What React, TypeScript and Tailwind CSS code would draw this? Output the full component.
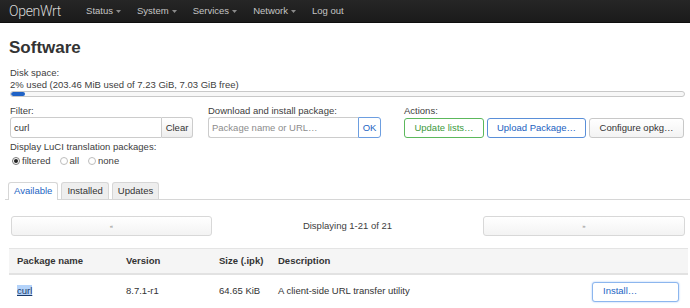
import React from 'react';

const menu = ['Status', 'System', 'Services', 'Network'];

const Caret = () => (
  <svg width="5" height="3" viewBox="0 0 5 3" className="ml-[3px]">
    <path d="M0 0h5L2.5 3z" fill="#8a8a8a" />
  </svg>
);

const Radio = ({ checked, label }: { checked?: boolean; label: string }) => (
  <label className="flex items-center mr-[9px]">
    <span
      className={`w-[8px] h-[8px] rounded-full border bg-white flex items-center justify-center ${
        checked ? 'border-[#777]' : 'border-[#bdbdbd]'
      }`}
    >
      {checked && <span className="w-[4px] h-[4px] rounded-full bg-[#222]" />}
    </span>
    <span className="ml-[2px]">{label}</span>
  </label>
);

export default function App() {
  return (
    <div className="w-[690px] h-[308px] overflow-hidden bg-white text-[#404040] text-[9.5px] font-['Liberation_Sans',Arial,sans-serif]">
      {/* top bar */}
      <header className="h-[23px] flex items-center pl-[9px] bg-linear-to-b from-[#262626] to-[#1b1b1b] border-b border-[#0e0e0e]">
        <div className="text-[14px] font-light text-[#d8d8d8] font-['Roboto','Liberation_Sans',sans-serif] tracking-[-0.3px]">OpenWrt</div>
        <nav className="flex items-center ml-[17px] text-[#c4c4c4]">
          {menu.map((m) => (
            <div key={m} className="flex items-center px-[8px]">
              {m}
              <Caret />
            </div>
          ))}
          <div className="px-[8px]">Log out</div>
        </nav>
      </header>

      <main className="pl-[9px] pr-[5px]">
        <h2 className="mt-[15px] text-[17px] leading-[20px] font-bold text-[#333]">Software</h2>

        <div className="mt-[9px] ml-[1px] leading-[12px]">
          <div>Disk space:</div>
          <div>2% used (203.46 MiB used of 7.23 GiB, 7.03 GiB free)</div>
          <div className="h-[6px] rounded-[3px] border border-[#c8c8c8] bg-[#f7f7f7] overflow-hidden">
            <div className="h-full w-[14px] bg-[#1f62c6] rounded-[2px]" />
          </div>
        </div>

        <div className="mt-[8px] ml-[1px] grid grid-cols-[198px_196px_1fr] leading-[12px]">
          <div>
            <div>Filter:</div>
            <div className="flex h-[21px] w-[183px]">
              <div className="flex-1 flex items-center pl-[3px] border border-[#ccc] rounded-l-[3px] text-[#333]">curl</div>
              <div className="w-[31px] flex items-center justify-center border border-l-0 border-[#ccc] rounded-r-[3px] bg-linear-to-b from-white to-[#eeeeee] text-[#333]">Clear</div>
            </div>
          </div>
          <div>
            <div>Download and install package:</div>
            <div className="flex h-[21px] w-[173px]">
              <div className="flex-1 flex items-center pl-[3px] border border-[#ccc] border-r-0 rounded-l-[3px] text-[#8c8c8c]">Package name or URL…</div>
              <div className="w-[23px] flex items-center justify-center border border-[#6d9ee0] rounded-r-[3px] bg-white text-[#2465c4]">OK</div>
            </div>
          </div>
          <div>
            <div>Actions:</div>
            <div className="flex gap-[3px] h-[20px] mt-[1px] w-[280px]">
              <div className="w-[80px] flex items-center justify-center rounded-[3px] border border-[#5cb85c] bg-white text-[#3d9a3d]">Update lists…</div>
              <div className="w-[99px] flex items-center justify-center rounded-[3px] border border-[#5a8fd8] bg-white text-[#2160c0]">Upload Package…</div>
              <div className="flex-1 flex items-center justify-center rounded-[3px] border border-[#c8c8c8] bg-linear-to-b from-white to-[#f3f3f3] text-[#333]">Configure opkg…</div>
            </div>
          </div>
        </div>

        <div className="mt-[3px] ml-[1px] leading-[12px]">
          <div>Display LuCI translation packages:</div>
          <div className="flex items-center mt-[2px] ml-[2px]">
            <Radio checked label="filtered" />
            <Radio label="all" />
            <Radio label="none" />
          </div>
        </div>

        {/* tabs */}
        <div className="mt-[15px] -ml-[4px] -mr-[5px] flex items-end border-b border-[#d6d6d6] pl-[3px] h-[18px]">
          <div className="h-[18px] px-[5px] flex items-center rounded-t-[3px] border border-b-0 border-[#d6d6d6] bg-white text-[#2465c4] -mb-px">Available</div>
          <div className="ml-[3px] h-[17px] px-[5px] flex items-center rounded-t-[3px] border border-b-0 border-[#d6d6d6] bg-[#eeeeee] text-[#333]">Installed</div>
          <div className="ml-[3px] h-[17px] px-[5px] flex items-center rounded-t-[3px] border border-b-0 border-[#d6d6d6] bg-[#eeeeee] text-[#333]">Updates</div>
        </div>

        {/* pager */}
        <div className="mt-[16px] ml-[2px] flex items-center h-[20px]">
          <div className="w-[201px] h-full flex items-center justify-center rounded-[3px] border border-[#d8d8d8] bg-linear-to-b from-white to-[#f3f3f3] text-[6px] text-[#888]">«</div>
          <div className="flex-1 text-center">Displaying 1-21 of 21</div>
          <div className="w-[202px] h-full flex items-center justify-center rounded-[3px] border border-[#d8d8d8] bg-linear-to-b from-white to-[#f3f3f3] text-[6px] text-[#888]">»</div>
        </div>

        {/* table */}
        <div className="mt-[12px] -mr-[3px] border-t border-[#e4e4e4]">
          <div className="h-[26px] flex items-center bg-[#f5f5f5] font-bold text-[#333] border-b-[2px] border-[#e2e2e2]">
            <div className="w-[117px] pl-[8px]">Package name</div>
            <div className="w-[93px]">Version</div>
            <div className="w-[59px]">Size (.ipk)</div>
            <div>Description</div>
          </div>
          <div className="h-[34px] flex items-center border-b border-[#e2e2e2] text-[#333]">
            <div className="w-[117px] pl-[8px]">
              <span className="underline bg-[#b4d3fa] text-[#1a3a6a]">curl</span>
            </div>
            <div className="w-[93px]">8.7.1-r1</div>
            <div className="w-[59px]">64.65 KiB</div>
            <div className="flex-1">A client-side URL transfer utility</div>
            <div className="mr-[9px] w-[87px] h-[20px] flex items-center pl-[10px] rounded-[3px] border border-[#8cb6ee] shadow-[0_0_2px_#9cc2f5] bg-white text-[#2465c4]">Install…</div>
          </div>
        </div>
      </main>
    </div>
  );
}
